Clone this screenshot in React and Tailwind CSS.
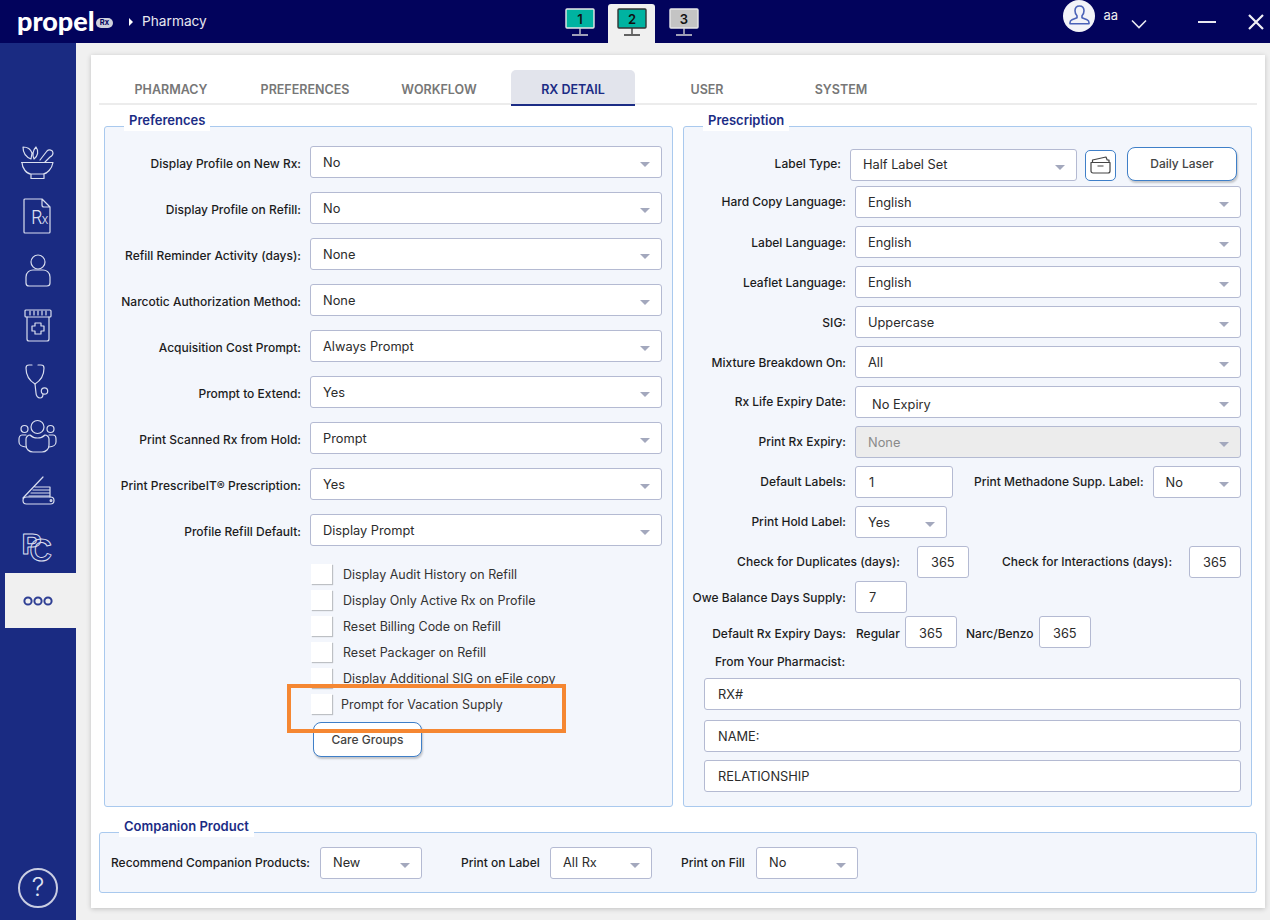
const F = { fontFamily: '"Inter", "Liberation Sans", sans-serif' };

function Caret() {
  return <span className="absolute right-[11px] top-[15px] w-0 h-0 border-l-[5px] border-r-[5px] border-t-[5px] border-l-transparent border-r-transparent border-t-[#a3a8bd]" />;
}

function Select({ value, className = "", pad = "pl-3", text = "pt-[2px]", disabled = false }) {
  return (
    <div className={`relative h-8 shrink-0 rounded-[3px] border border-[#b4bad2] flex items-center ${pad} ${text} text-[12.8px] ${disabled ? "bg-[#ececec] text-[#8a8a8a]" : "bg-white text-[#2b2b2b]"} ${className}`}>
      {value}
      <Caret />
    </div>
  );
}

function Input({ value, className = "", text = "pt-[2px]" }) {
  return (
    <div className={`h-8 shrink-0 rounded-[3px] border border-[#b4bad2] bg-white flex items-center pl-[13px] ${text} text-[12.8px] text-[#2b2b2b] ${className}`}>{value}</div>
  );
}

function Label({ children, className = "" }) {
  return <div className={`text-[12px] font-medium text-[#1c1c1c] whitespace-nowrap ${className}`}>{children}</div>;
}

function Legend({ children, className = "" }) {
  return <div className={`absolute top-[-12px] h-[16px] pb-[4px] bg-white flex items-center text-[13px] font-semibold text-[#1b2c85] px-[5px] ${className}`}>{children}</div>;
}

function Check({ label, textClass = "ml-[11px]" }) {
  return (
    <div className="h-[26px] flex items-center">
      <div className="w-[21px] h-[20px] bg-white shadow-[1px_1px_1px_rgba(0,0,0,0.22)]" />
      <span className={`text-[12.5px] pt-[2px] text-[#333] ${textClass}`}>{label}</span>
    </div>
  );
}

function Btn({ children, className = "" }) {
  return (
    <div className={`bg-white border border-[#3f7fc8] rounded-[8px] shadow-[1px_2px_2px_rgba(0,0,0,0.2)] flex items-center justify-center text-[12px] font-medium text-[#444] ${className}`}>{children}</div>
  );
}

const Ic = ({ children }) => (
  <svg width="36" height="36" viewBox="0 0 36 36" fill="none" stroke="#d9deef" strokeWidth="1.2" strokeLinecap="round" strokeLinejoin="round" className="overflow-visible">{children}</svg>
);

function Monitor({ n, fill, frame, stand }) {
  return (
    <svg width="30" height="28" viewBox="0 0 30 28">
      <rect x="1" y="1" width="28" height="19" rx="1" fill={fill} stroke={frame} strokeWidth="1.4" />
      <path d="M15 20v6M7 27h16" stroke={stand} strokeWidth="1.3" fill="none" />
      <text x="15" y="15.500" textAnchor="middle" fontSize="13" fontWeight="600" fill="#111" style={{ fontFamily: "Inter, sans-serif" }}>{n}</text>
    </svg>
  );
}

const sideIcons = [
  <Ic key="a">
    <path d="M1.500 19.500h31.500M2 19.500c0 6 5 11.500 9 11.500h12c4 0 9-5.500 10-11.500M11 31v4.500h13V31" />
    <path d="M3 4c5 0 8 3 9 6l-1 6c-5-2-8-6-8-12zM16 4c-3 3-4 8-2 12 4-3 5-8 2-12z" />
    <path d="M20 17l7-9c2-2 6-1 6 2 0 2-1 3-3 4l-5 5" />
  </Ic>,
  <Ic key="b">
    <path d="M5 1h17l8 8v25a1 1 0 0 1-1 1H5a1 1 0 0 1-1-1V2a1 1 0 0 1 1-1zM22 1v6a2 2 0 0 0 2 2h6" />
    <text x="11" y="26" fontSize="18" fontWeight="300" fill="#d9deef" stroke="none" style={{ fontFamily: "Inter, sans-serif" }}>R<tspan fontSize="13" dx="-1">x</tspan></text>
  </Ic>,
  <Ic key="c"><circle cx="18" cy="9" r="7" /><path d="M9 33c-2 0-3-1-3-3v-6c0-5 4-7 7-7h10c3 0 7 2 7 7v6c0 2-1 3-3 3z" /></Ic>,
  <Ic key="d"><rect x="5" y="2" width="26" height="7" rx="1" /><path d="M7 9v22a2 2 0 0 0 2 2h18a2 2 0 0 0 2-2V9M10 3v4M14 3v4M18 3v4M22 3v4M26 3v4" /><path d="M15 15h6v3h3v5h-3v3h-6v-3h-3v-5h3z" /></Ic>,
  <Ic key="e">
    <path d="M12 2H9C7 2 6 3 6 5c0 7 4 13 9 16 5-3 9-9 9-16 0-2-1-3-3-3h-3" />
    <path d="M15 21l1 9c0 3 2 5 4 5s3-1 3-4" />
    <circle cx="24.500" cy="28" r="3.200" />
  </Ic>,
  <Ic key="f">
    <circle cx="17.500" cy="9" r="6.500" /><circle cx="4.500" cy="11" r="3.500" /><circle cx="30.500" cy="11" r="3.500" />
    <path d="M10 17c-2 0-4 2-4 4v6c0 4 3 7 7 7h9c4 0 7-3 7-7v-6c0-2-2-4-4-4-2 2-5 3-7.500 3S12 19 10 17z" />
    <path d="M6 17H2c-2 0-3 2-3 4v3c0 3 3 5 7 5M29 17h4c2 0 3 2 3 4v3c0 3-3 5-7 5" />
  </Ic>,
  <Ic key="g">
    <path d="M3 25L23 4M15 14h15M13 17h17M11 20h19M9 23h21M30 14v10" />
    <rect x="3" y="24" width="31" height="7" rx="3.500" /><circle cx="31" cy="27.500" r="0.900" />
  </Ic>,
  <Ic key="h">
    <text x="1.500" y="26" fontSize="30" fontWeight="700" fill="none" stroke="#d9deef" strokeWidth="1" style={{ fontFamily: '"Liberation Sans", sans-serif' }}>P<tspan dx="-12" dy="7" fontSize="31">C</tspan></text>
  </Ic>,
];

function Sidebar() {
  return (
    <aside className="w-[76px] shrink-0 bg-[#1a2b82] flex flex-col pt-[90px] items-stretch">
      {sideIcons.map((ic, i) => (
        <div key={i} className="h-[55px] flex items-center justify-center">{ic}</div>
      ))}
      <div className="h-[55px] ml-[5px] bg-[#f0f0f0] flex items-center justify-center pr-[5px]">
        <svg width="30" height="12" viewBox="0 0 30 12" fill="none" stroke="#2f3f94" strokeWidth="2">
          <circle cx="5" cy="6" r="3.600" /><circle cx="15" cy="6" r="3.600" /><circle cx="25" cy="6" r="3.600" />
        </svg>
      </div>
      <div className="mt-auto mb-[12px] ml-[18px] w-[40px] h-[40px] rounded-full border-2 border-[#c9cde2] flex items-center justify-center text-[25px] font-light text-[#dfe3f2]">?</div>
    </aside>
  );
}

function Header() {
  return (
    <header className="relative h-[43px] shrink-0 bg-[#02035c] flex items-center text-white">
      <div className="ml-[17px] w-[96px] flex items-center">
        <span className="text-[27px] font-black leading-none mt-[-3px]" style={{ fontFamily: '"Lato", sans-serif' }}>propel</span>
        <span className="ml-auto mt-[2px] w-[17px] h-[10px] rounded-full bg-[#cfd0dc] text-[#02035c] text-[7.500px] font-bold leading-[10px] text-center">Rx</span>
      </div>
      <span className="ml-[16px] w-0 h-0 border-t-[4px] border-b-[4px] border-l-[4px] border-t-transparent border-b-transparent border-l-white" />
      <span className="ml-[9px] text-[13.700px] text-[#e8e8f0]">Pharmacy</span>
      <div className="absolute left-[556px] top-[4px] flex items-stretch h-[39px]">
        <div className="w-[47px] flex justify-center pt-[4px]"><Monitor n="1" fill="#00b3a1" frame="#e8e8e8" stand="#d5d5d5" /></div>
        <div className="ml-[5px] w-[47px] bg-[#f0f0f0] rounded-t-[3px] flex justify-center pt-[4px]"><Monitor n="2" fill="#00b3a1" frame="#333" stand="#333" /></div>
        <div className="ml-[5px] w-[47px] flex justify-center pt-[4px]"><Monitor n="3" fill="#c4c4c4" frame="#e8e8e8" stand="#d5d5d5" /></div>
      </div>
      <div className="ml-auto flex items-center h-full">
        <div className="w-[32px] h-[32px] rounded-full bg-[#f2f3f8] flex items-center justify-center mt-[-12px]">
          <svg width="25" height="25" viewBox="0 0 25 25" fill="none" stroke="#4a62b8" strokeWidth="1.600" strokeLinejoin="round">
            <path d="M12.500 3c3 0 4.500 2.200 4.500 4.800 0 2.200-1 4-2 5v2l5 2c1.500.6 2 1.500 2 3v1H3v-1c0-1.500.5-2.400 2-3l5-2v-2c-1-1-2-2.800-2-5C8 5.200 9.500 3 12.500 3z" />
          </svg>
        </div>
        <span className="ml-[8px] text-[13px] mt-[-11px] text-[#eee]">aa</span>
        <svg className="ml-[13px] mt-[4px]" width="16" height="10" viewBox="0 0 16 10" fill="none" stroke="#e8e8f0" strokeWidth="1.600"><path d="M1 1.500l7 7 7-7" /></svg>
        <div className="ml-[51px] w-[18px] h-[2px] bg-[#e8e8f0]" />
        <svg className="ml-[32px] mr-[6px]" width="16" height="16" viewBox="0 0 16 16" fill="none" stroke="#f0f0f5" strokeWidth="2.200"><path d="M1 1l14 14M15 1L1 15" /></svg>
      </div>
    </header>
  );
}

function Tabs() {
  const tabs = ["PHARMACY", "PREFERENCES", "WORKFLOW", "RX DETAIL", "USER", "SYSTEM"];
  return (
    <div className="h-[35px] ml-2 mr-2 flex gap-[10px] pl-[10px] border-b-2 border-[#ececec]">
      {tabs.map((t) =>
        t === "RX DETAIL" ? (
          <div key={t} className="w-[124px] h-[36px] bg-[#e2e4ec] rounded-t-[5px] border-b-2 border-[#1b2c85] flex items-end justify-center pb-[4px] text-[12.500px] font-semibold text-[#1b2c85]">{t}</div>
        ) : (
          <div key={t} className="w-[124px] flex items-end justify-center pb-[3px] text-[12.500px] font-semibold text-[#777]">{t}</div>
        )
      )}
    </div>
  );
}

const leftRows = [
  ["Display Profile on New Rx:", "No"],
  ["Display Profile on Refill:", "No"],
  ["Refill Reminder Activity (days):", "None"],
  ["Narcotic Authorization Method:", "None"],
  ["Acquisition Cost Prompt:", "Always Prompt"],
  ["Prompt to Extend:", "Yes"],
  ["Print Scanned Rx from Hold:", "Prompt"],
  ["Print PrescribeIT® Prescription:", "Yes"],
  ["Profile Refill Default:", "Display Prompt"],
];

const fieldset = "relative bg-[#f3f6fc] border border-[#a9c9ee] rounded-[3px]";

function LeftPanel() {
  return (
    <section className={`${fieldset} w-[569px] h-[681px] pt-[19px]`}>
      <Legend className="left-[19px]">Preferences</Legend>
      <div className="flex flex-col gap-[14px]">
        {leftRows.map(([l, v]) => (
          <div key={l} className="flex items-center">
            <Label className="w-[196px] text-right pt-[4px]">{l}</Label>
            <Select value={v} className="ml-[9px] w-[352px]" />
          </div>
        ))}
      </div>
      <div className="ml-[206px] mt-[15px]">
        <Check label="Display Audit History on Refill" />
        <Check label="Display Only Active Rx on Profile" />
        <Check label="Reset Billing Code on Refill" />
        <Check label="Reset Packager on Refill" />
        <Check label="Display Additional SIG on eFile copy" />
        <Check label="Prompt for Vacation Supply" textClass="ml-[9px]" />
      </div>
      <Btn className="ml-[208px] mt-[5px] w-[109px] h-[35px]">Care Groups</Btn>
      <div className="absolute left-[182px] top-[557px] w-[279px] h-[49px] border-[4px] border-[#f58732]" />
    </section>
  );
}

function RRow({ label, children, h = "mt-2", lab = "" }) {
  return (
    <div className={`flex items-center ${h}`}>
      <Label className={`w-[162px] text-right ${lab}`}>{label}</Label>
      <div className="ml-[9px] flex items-center">{children}</div>
    </div>
  );
}

function RightPanel() {
  return (
    <section className={`${fieldset} w-[569px] h-[681px] pt-[19px]`}>
      <Legend className="left-[19px]">Prescription</Legend>
      <div className="flex items-center h-[35px]">
        <Label className="w-[157px] text-right">Label Type:</Label>
        <Select value="Half Label Set" text="pt-0" className="ml-[9px] w-[227px] mt-[2px]" />
        <div className="ml-[8px] mt-[3px] w-[31px] h-[31px] bg-white rounded-[5px] border-[1.500px] border-[#3f7fc8] flex items-center justify-center">
          <svg width="21" height="18" viewBox="0 0 21 18" fill="none" stroke="#444" strokeWidth="1.200" strokeLinejoin="round">
            <path d="M2.500 6.500V4L16 1l1.200 3H19v2.500M1 6.500h19v8.500a2 2 0 0 1-2 2H3a2 2 0 0 1-2-2zM7.500 10h6" />
          </svg>
        </div>
        <Btn className="ml-[11px] w-[110px] h-[34px]">Daily Laser</Btn>
      </div>
      <RRow label="Hard Copy Language:" h="mt-[5px]"><Select value="English" className="w-[386px]" /></RRow>
      <RRow label="Label Language:" lab="pt-[2px]"><Select value="English" className="w-[386px]" /></RRow>
      <RRow label="Leaflet Language:" lab="pt-[2px]"><Select value="English" className="w-[386px]" /></RRow>
      <RRow label="SIG:" lab="pt-[2px]"><Select value="Uppercase" className="w-[386px]" /></RRow>
      <RRow label="Mixture Breakdown On:" lab="pt-[2px]"><Select value="All" className="w-[386px]" /></RRow>
      <RRow label="Rx Life Expiry Date:"><Select value="No Expiry" pad="pl-4" text="pt-[6px]" className="w-[386px]" /></RRow>
      <RRow label="Print Rx Expiry:"><Select value="None" disabled className="w-[386px]" /></RRow>
      <RRow label="Default Labels:">
        <Input value="1" className="w-[98px]" />
        <Label className="ml-[21px]">Print Methadone Supp. Label:</Label>
        <Select value="No" className="ml-[9px] w-[88px]" />
      </RRow>
      <RRow label="Print Hold Label:"><Select value="Yes" className="w-[92px]" /></RRow>
      <div className="flex items-center mt-2">
        <Label className="w-[216px] text-right">Check for Duplicates (days):</Label>
        <Input value="365" className="ml-[17px] w-[52px]" />
        <Label className="ml-[33px] w-[170px] text-right">Check for Interactions (days):</Label>
        <Input value="365" className="ml-[17px] w-[52px]" />
      </div>
      <RRow label="Owe Balance Days Supply:" h="mt-[3px]" lab="pt-[2px]"><Input value="7" className="w-[52px]" /></RRow>
      <RRow label="Default Rx Expiry Days:" h="mt-[3px]" lab="pt-[4px]">
        <Label className="w-[50px] pl-px pt-[4px]">Regular</Label>
        <Input value="365" text="pt-[4px]" className="w-[52px]" />
        <Label className="ml-[9px] w-[73px] pt-[4px]">Narc/Benzo</Label>
        <Input value="365" text="pt-[4px]" className="w-[52px]" />
      </RRow>
      <Label className="ml-[31px] mt-[5px] h-[15px]">From Your Pharmacist:</Label>
      <div className="ml-[20px] mt-[10px] flex flex-col">
        <Input value="RX#" className="w-[537px]" />
        <Input value="NAME:" className="w-[537px] mt-[10px]" />
        <Input value="RELATIONSHIP" className="w-[537px] mt-2" />
      </div>
    </section>
  );
}

function Companion() {
  return (
    <section className={`${fieldset} mx-2 mt-[25px] h-[61px] flex items-center`}>
      <Legend className="left-[19px]">Companion Product</Legend>
      <Label className="ml-[11px] w-[200px]">Recommend Companion Products:</Label>
      <Select value="New" text="pt-0" className="ml-[9px] w-[102px]" />
      <Label className="ml-[39px] w-[80px]">Print on Label</Label>
      <Select value="All Rx" text="pt-0" className="ml-[9px] w-[102px]" />
      <Label className="ml-[29px] w-[65px]">Print on Fill</Label>
      <Select value="No" text="pt-0" className="ml-[10px] w-[102px]" />
    </section>
  );
}

export default function App() {
  return (
    <div className="w-[1270px] h-[920px] flex flex-col bg-[#f0f0f0] overflow-hidden" style={F}>
      <Header />
      <div className="flex flex-1 min-h-0">
        <Sidebar />
        <main className="flex-1 pl-[15px] pr-[5px] pt-[12px] pb-[12px]">
          <div className="h-full bg-white shadow-[0_1px_5px_rgba(0,0,0,0.2)] pt-[15px]">
            <Tabs />
            <div className="flex gap-[10px] ml-[13px] mt-[21px]">
              <LeftPanel />
              <RightPanel />
            </div>
            <Companion />
          </div>
        </main>
      </div>
    </div>
  );
}
